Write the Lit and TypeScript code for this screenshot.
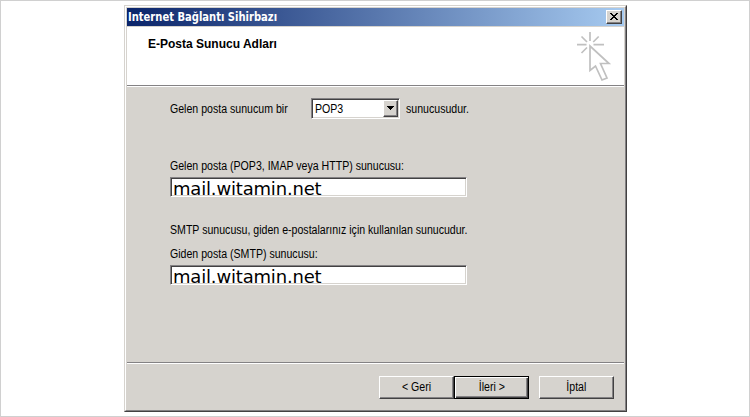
import { LitElement, html, css } from "lit";
import { customElement } from "lit/decorators.js";

@customElement("app-root")
export class AppRoot extends LitElement {
  static styles = css`
    :host {
      display: flex;
      justify-content: center;
      box-sizing: border-box;
      width: 750px;
      height: 417px;
      padding: 4px 0 0 1px;
      border: 1px solid #d0d0d0;
      background: #fff;
      color: #000;
      font: 12px/14px "Liberation Sans", Arial, sans-serif;
      white-space: nowrap;
      overflow: hidden;
    }
    * { box-sizing: border-box; }
    .dialog {
      width: 503px;
      height: 407px;
      border: 1px solid;
      border-color: #d6d3ce #424142 #424142 #d6d3ce;
    }
    .frame {
      display: flex;
      flex-direction: column;
      height: 100%;
      padding: 1px;
      border: 1px solid;
      border-color: #fff #848284 #848284 #fff;
      background: #d6d3ce;
    }
    .title {
      display: flex;
      align-items: center;
      justify-content: space-between;
      height: 18px;
      padding: 0 2px 0 1px;
      background: linear-gradient(90deg, #0a246a, #a6caf0);
      color: #fff;
      font: bold 12px/18px "DejaVu Sans Condensed", "DejaVu Sans", sans-serif;
    }
    /* Narrow dialog lettering */
    .n {
      display: inline-block;
      transform: scaleX(0.882);
      transform-origin: 0 50%;
    }
    .btn .n { transform-origin: 50% 50%; }
    .caption {
      display: inline-block;
      transform: scaleX(0.925);
      transform-origin: 0 50%;
    }
    .close {
      width: 16px;
      height: 14px;
      border: 1px solid;
      border-color: #fff #424142 #424142 #fff;
      box-shadow: inset -1px -1px #848284;
      background: #d6d3ce;
      display: block;
    }
    .close svg, .arrow svg { display: block; }
    .header {
      display: flex;
      justify-content: space-between;
      height: 58px;
      margin-top: 1px;
      padding: 10px 9px 0 21px;
      background: #fff;
    }
    .header b { font-size: 12px; line-height: 14px; }
    .logo { margin-top: -6px; }
    .rule {
      height: 2px;
      flex: none;
      border-top: 1px solid #848284;
      border-bottom: 1px solid #fff;
    }
    .body { flex: 1; padding: 11px 0 0 43px; }
    .row { display: flex; height: 21px; align-items: center; }
    .row .lead { width: 141px; }
    .select {
      display: flex;
      justify-content: space-between;
      width: 89px;
      height: 21px;
      margin-right: 6px;
      padding: 1px;
    }
    .sunken {
      border: 1px solid;
      border-color: #848284 #fff #fff #848284;
      box-shadow: inset 1px 1px #424142, inset -1px -1px #d6d3ce;
      background: #fff;
    }
    .value { padding-left: 2px; line-height: 18px; }
    .arrow {
      width: 15px;
      height: 17px;
      border: 1px solid;
      border-color: #fff #424142 #424142 #fff;
      box-shadow: inset -1px -1px #848284;
      background: #d6d3ce;
    }
    .label { height: 14px; }
    .l1 { margin-top: 40px; }
    .l2 { margin-top: 26px; }
    .l3 { margin-top: 10px; }
    .field {
      width: 297px;
      height: 20px;
      margin-top: 4px;
      padding-left: 2px;
      font: 18px/21px "DejaVu Sans", sans-serif;
      letter-spacing: -0.18px;
    }
    .footer {
      display: flex;
      height: 45px;
      padding: 12px 0 0 252px;
    }
    .btn {
      width: 75px;
      height: 23px;
      border: 1px solid;
      border-color: #fff #424142 #424142 #fff;
      box-shadow: inset -1px -1px #848284;
      line-height: 20px;
      text-align: center;
    }
    .default {
      border-color: #000;
      box-shadow: inset 1px 1px #fff, inset -1px -1px #424142, inset -2px -2px #848284;
    }
    .cancel { margin-left: 10px; }
  `;

  render() {
    return html`
      <div class="dialog"><div class="frame">
        <div class="title">
          <span class="caption">Internet Bağlantı Sihirbazı</span>
          <span class="close"><svg width="14" height="12" viewBox="0 0 14 12" shape-rendering="crispEdges">
            <path d="M3 2h2v1h1v1h2v-1h1v-1h2v1h-1v1h-1v1h-1v1h1v1h1v1h1v1h-2v-1h-1v-1h-2v1h-1v1h-2v-1h1v-1h1v-1h1v-1h-1v-1h-1v-1h-1z"/></svg></span>
        </div>
        <div class="header">
          <b>E-Posta Sunucu Adları</b>
          <svg class="logo" width="40" height="52" viewBox="575 31 40 52" fill="none" stroke="#c0c0c0" stroke-width="1.7">
            <path d="M590 32v9M577 44.700h9.500M593.500 44.700h10.500M581.500 36.500l5.500 5.500M598.700 36.500l-5.500 5.500M581.500 53l5.500-5.500"/>
            <path d="M590 46v24.500l5.500-4.500l6.500 14l5-2l-6.500-14.500h8.500z"/>
          </svg>
        </div>
        <div class="rule"></div>
        <div class="body">
          <div class="row">
            <span class="lead"><span class="n">Gelen posta sunucum bir</span></span>
            <div class="select sunken"><span class="value"><span class="n">POP3</span></span>
              <div class="arrow"><svg width="13" height="15" shape-rendering="crispEdges"><path d="M3 5h7v1h-1v1h-1v1h-1v1h-1v-1h-1v-1h-1v-1h-1z"/></svg></div>
            </div>
            <span class="n">sunucusudur.</span>
          </div>
          <div class="label l1"><span class="n">Gelen posta (POP3, IMAP veya HTTP) sunucusu:</span></div>
          <div class="field sunken">mail.witamin.net</div>
          <div class="label l2"><span class="n">SMTP sunucusu, giden e-postalarınız için kullanılan sunucudur.</span></div>
          <div class="label l3"><span class="n">Giden posta (SMTP) sunucusu:</span></div>
          <div class="field sunken">mail.witamin.net</div>
        </div>
        <div class="rule"></div>
        <div class="footer">
          <div class="btn"><span class="n">&lt; Geri</span></div>
          <div class="btn default"><span class="n">İleri &gt;</span></div>
          <div class="btn cancel"><span class="n">İptal</span></div>
        </div>
      </div></div>
    `;
  }
}
